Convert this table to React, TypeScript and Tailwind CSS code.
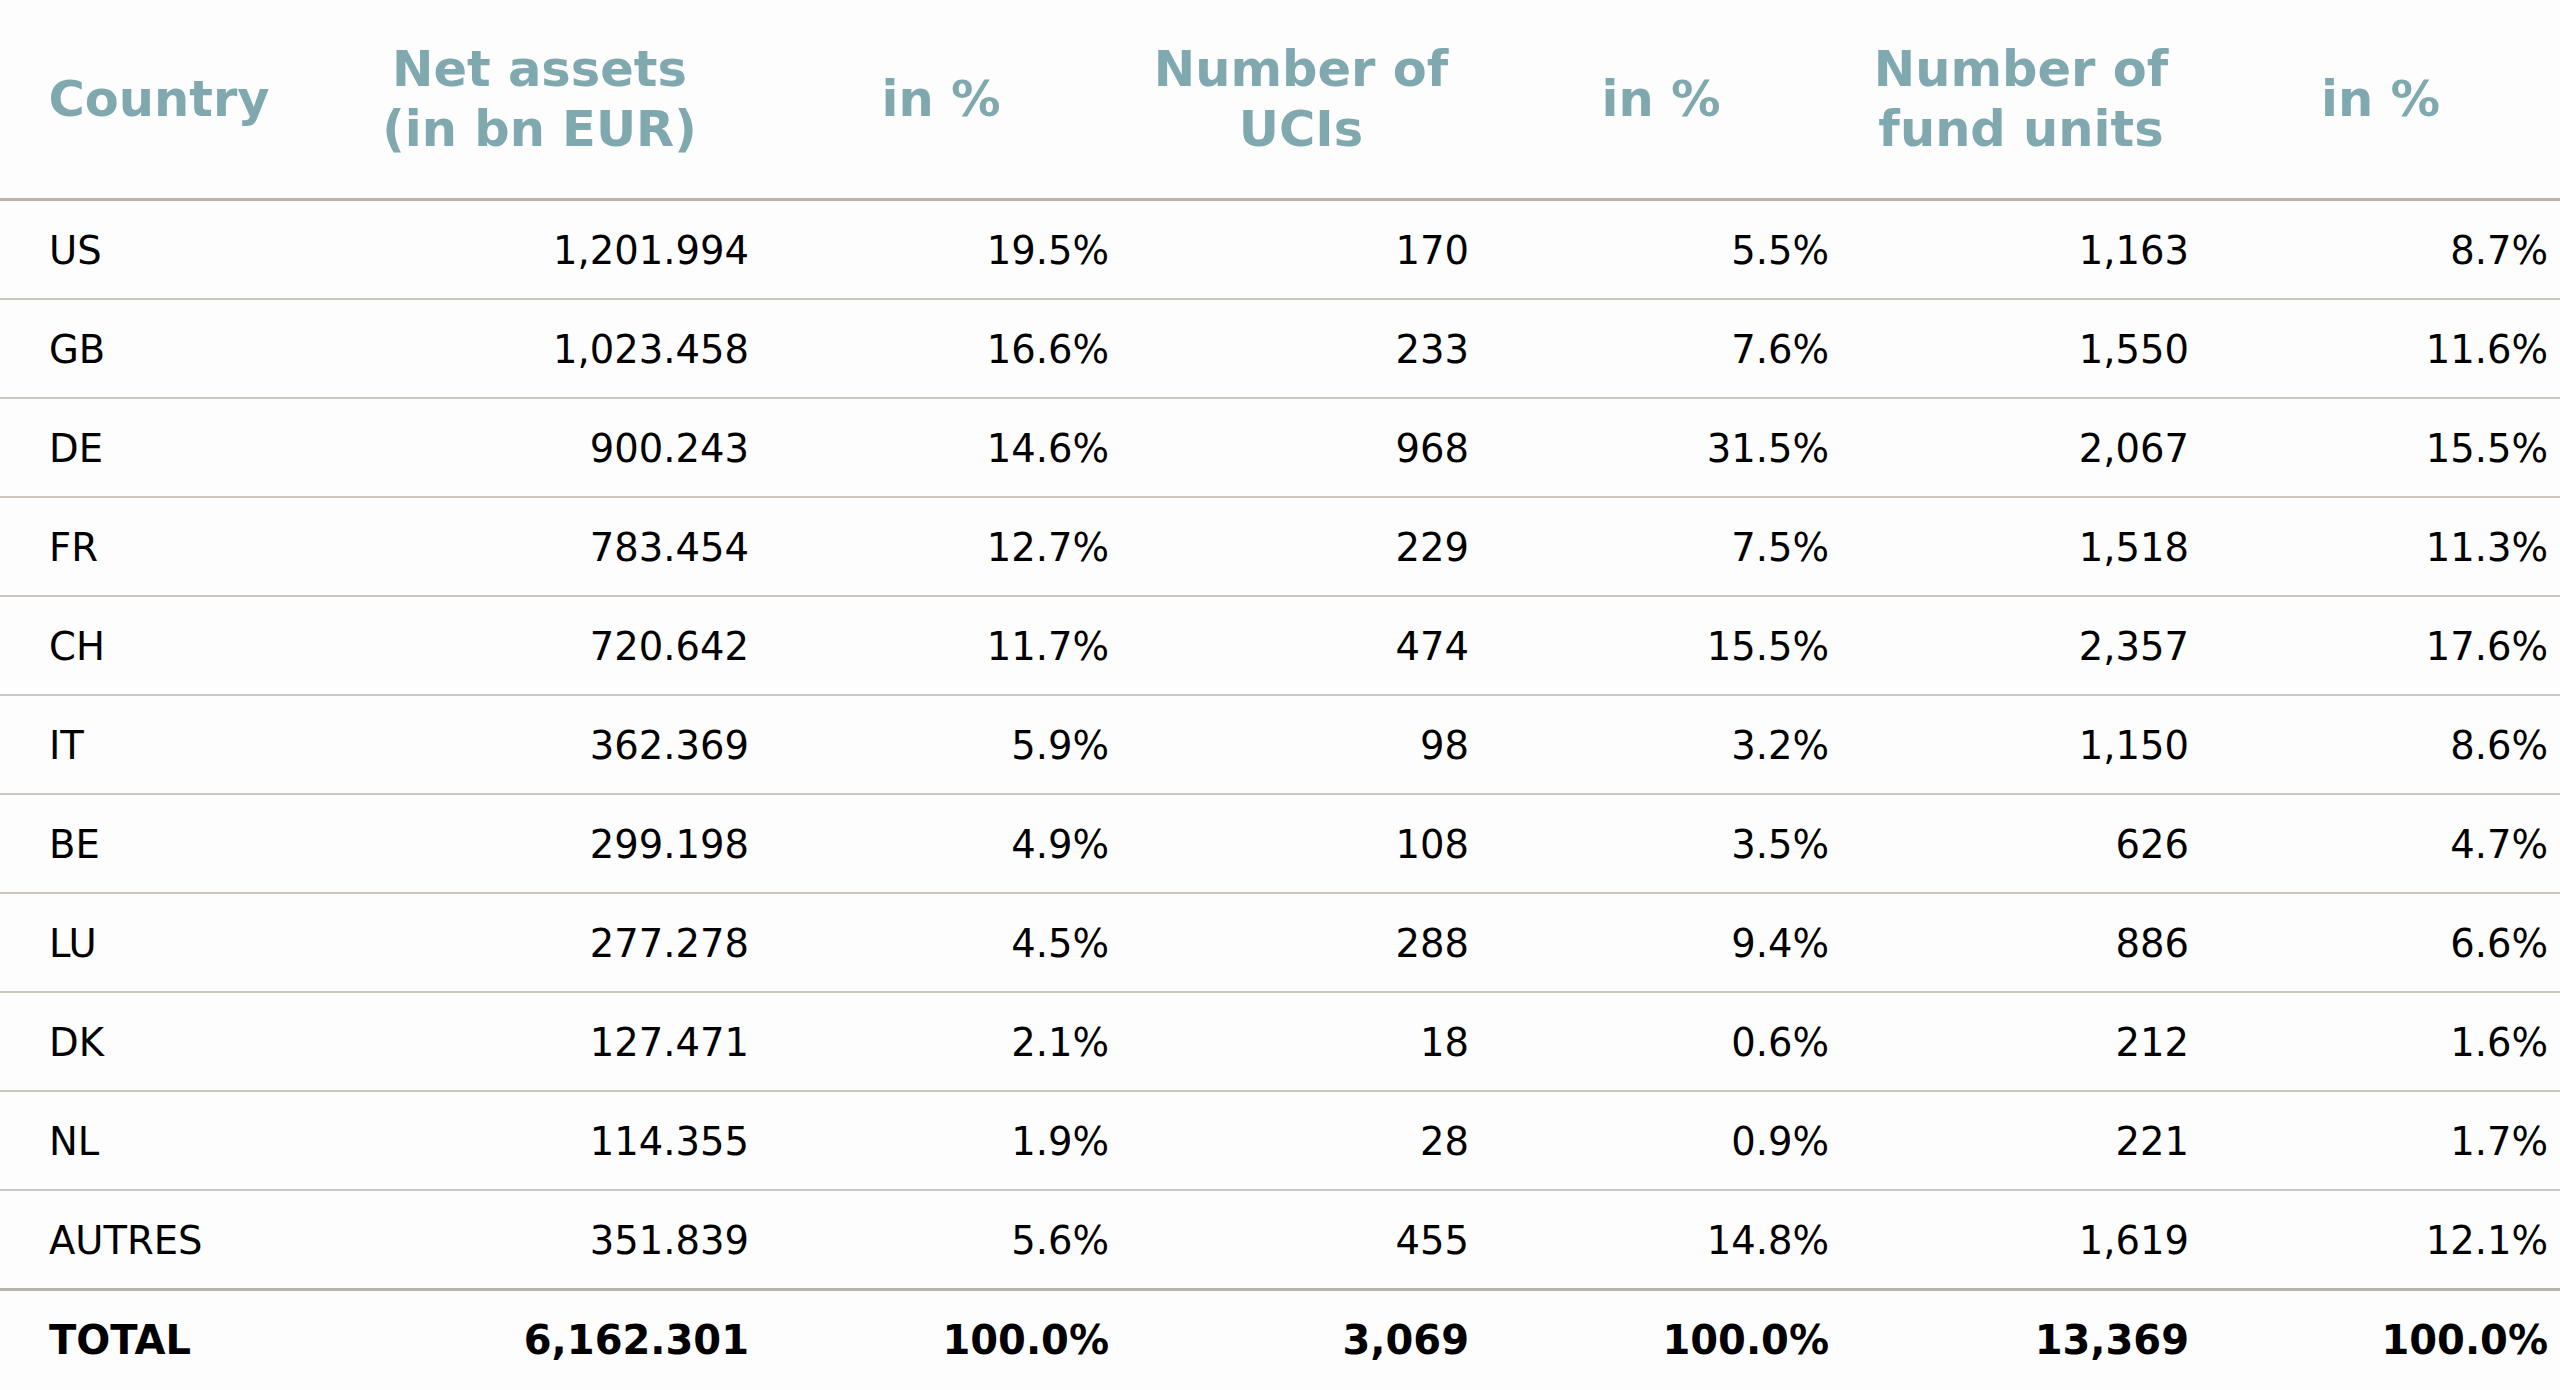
import React from "react";

const rows = [
  ["US", "1,201.994", "19.5%", "170", "5.5%", "1,163", "8.7%"],
  ["GB", "1,023.458", "16.6%", "233", "7.6%", "1,550", "11.6%"],
  ["DE", "900.243", "14.6%", "968", "31.5%", "2,067", "15.5%"],
  ["FR", "783.454", "12.7%", "229", "7.5%", "1,518", "11.3%"],
  ["CH", "720.642", "11.7%", "474", "15.5%", "2,357", "17.6%"],
  ["IT", "362.369", "5.9%", "98", "3.2%", "1,150", "8.6%"],
  ["BE", "299.198", "4.9%", "108", "3.5%", "626", "4.7%"],
  ["LU", "277.278", "4.5%", "288", "9.4%", "886", "6.6%"],
  ["DK", "127.471", "2.1%", "18", "0.6%", "212", "1.6%"],
  ["NL", "114.355", "1.9%", "28", "0.9%", "221", "1.7%"],
  ["AUTRES", "351.839", "5.6%", "455", "14.8%", "1,619", "12.1%"],
];

const total = ["TOTAL", "6,162.301", "100.0%", "3,069", "100.0%", "13,369", "100.0%"];

const headers: string[][] = [
  ["Country"],
  ["Net assets", "(in bn EUR)"],
  ["in %"],
  ["Number of", "UCIs"],
  ["in %"],
  ["Number of", "fund units"],
  ["in %"],
];

const grid = "grid grid-cols-[318px_443px_360px_360px_360px_360px_1fr]";

function Row({ cells, bold, border }: { cells: string[]; bold?: boolean; border: string }) {
  return (
    <div
      className={`${grid} items-center ${border} ${
        bold ? "font-bold text-[40px] pb-[2px]" : "text-[38.5px] pt-[3px]"
      }`}
    >
      {cells.map((c, i) => (
        <div key={i} className={i === 0 ? "pl-[49px] text-left" : "pr-[12px] text-right"}>
          {c}
        </div>
      ))}
    </div>
  );
}

export default function App() {
  return (
    <div
      className="w-[2560px] h-[1390px] bg-[#fdfdfd] text-black overflow-hidden leading-none"
      style={{ fontFamily: '"DejaVu Sans", Verdana, sans-serif' }}
    >
      {/* Header */}
      <div className={`${grid} h-[201px] items-center border-b-[3px] border-[#bab3ac]`}>
        {headers.map((h, i) => (
          <div key={i} className="text-center font-bold text-[49.5px] leading-[60px] text-[#80a9af]">
            {h.map((line) => (
              <div key={line}>{line}</div>
            ))}
          </div>
        ))}
      </div>

      {/* Body */}
      {rows.map((r, i) => (
        <Row
          key={r[0]}
          cells={r}
          border={
            i === rows.length - 1
              ? "h-[100px] border-b-[3px] border-[#bab3ac]"
              : "h-[99px] border-b-2 border-[#cdc6bf]"
          }
        />
      ))}

      {/* Total */}
      <Row cells={total} bold border="h-[99px]" />
    </div>
  );
}
